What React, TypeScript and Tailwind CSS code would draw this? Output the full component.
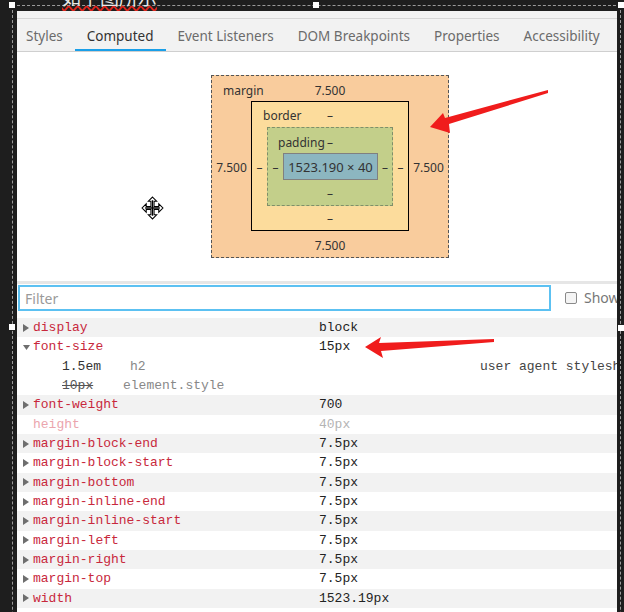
import React from "react";

type Row = { name: string; value: string; open?: boolean; dim?: boolean };

const rows: Row[] = [
  { name: "display", value: "block" },
  { name: "font-size", value: "15px", open: true },
  { name: "font-weight", value: "700" },
  { name: "height", value: "40px", dim: true },
  { name: "margin-block-end", value: "7.5px" },
  { name: "margin-block-start", value: "7.5px" },
  { name: "margin-bottom", value: "7.5px" },
  { name: "margin-inline-end", value: "7.5px" },
  { name: "margin-inline-start", value: "7.5px" },
  { name: "margin-left", value: "7.5px" },
  { name: "margin-right", value: "7.5px" },
  { name: "margin-top", value: "7.5px" },
  { name: "width", value: "1523.19px" },
];

const tabs = ["Styles", "Computed", "Event Listeners", "DOM Breakpoints", "Properties", "Accessibility"];

function Arrow({ open }: { open?: boolean }) {
  return (
    <svg width="7" height="8" viewBox="0 0 7 8" className="shrink-0">
      {open ? <polygon points="0,2 7,2 3.5,7" fill="#6e6e6e" /> : <polygon points="0,0 6,4 0,8" fill="#6e6e6e" />}
    </svg>
  );
}

function PropRow({ row, i }: { row: Row; i: number }) {
  const bg = i % 2 === 0 ? "bg-[#f2f2f2]" : "bg-white";
  return (
    <div className={bg}>
      <div className="flex h-[19.35px] items-center">
        <div className="flex w-[16px] shrink-0 justify-end pr-[3px]">{row.dim ? null : <Arrow open={row.open} />}</div>
        <span className={`w-[286px] shrink-0 ${row.dim ? "text-[#eba5ad]" : "text-[#c8283c]"}`}>{row.name}</span>
        <span className={row.dim ? "text-[#b4b4b4]" : "text-[#222]"}>{row.value}</span>
      </div>
      {row.open && (
        <>
          <div className="flex h-[19.35px] items-center whitespace-nowrap">
            <span className="w-[113px] shrink-0 pl-[45px] text-[#333]">1.5em</span>
            <span className="w-[350px] shrink-0 text-[#888]">h2</span>
            <span className="shrink-0 text-[#444]">user agent stylesheet</span>
          </div>
          <div className="flex h-[19.35px] items-center">
            <span className="w-[106px] shrink-0 pl-[45px] text-[#555] line-through">10px</span>
            <span className="text-[#888]">element.style</span>
          </div>
        </>
      )}
    </div>
  );
}

function BoxModel() {
  return (
    <div className="text-[12px] text-[#333] leading-none">
      <div className="grid grid-cols-[39px_auto_39px] grid-rows-[25px_auto_26px] border border-dashed border-[#555] bg-[#f9cc9d] w-[238px]">
        <div className="col-span-3 grid grid-cols-[1fr_auto_1fr] items-center pt-[4px]">
          <span className="pl-[11px]">margin</span>
          <span>7.500</span>
          <span />
        </div>
        <div className="flex items-center justify-center pt-[3px]">7.500</div>
        <div className="grid grid-cols-[15px_auto_15px] grid-rows-[25px_auto_24px] border border-black bg-[#fcdc9c]">
          <div className="col-span-3 grid grid-cols-[1fr_auto_1fr] items-center pt-[2px]">
            <span className="pl-[11px]">border</span>
            <span>–</span>
            <span />
          </div>
          <div className="flex items-center justify-center pt-[3px]">–</div>
          <div className="grid grid-cols-[15px_auto_14px] grid-rows-[25px_auto_25px] border border-dashed border-[#7f8f6a] bg-[#c3cf8a]">
            <div className="col-span-3 grid grid-cols-[1fr_auto_1fr] items-center pt-[4px]">
              <span className="pl-[10px]">padding</span>
              <span>–</span>
              <span />
            </div>
            <div className="flex items-center justify-center pt-[3px]">–</div>
            <div className="flex h-[27px] w-[95px] items-center justify-center border border-[#808080] bg-[#8cb6c0] pt-[2px] text-[13px]">
              1523.190 × 40
            </div>
            <div className="flex items-center justify-center pt-[3px]">–</div>
            <div className="col-span-3 flex items-center justify-center pt-[2px]">–</div>
          </div>
          <div className="flex items-center justify-center pt-[3px]">–</div>
          <div className="col-span-3 flex items-center justify-center pt-[2px]">–</div>
        </div>
        <div className="flex items-center justify-center pt-[3px]">7.500</div>
        <div className="col-span-3 flex items-center justify-center pt-[3px]">7.500</div>
      </div>
    </div>
  );
}

function MoveCursor() {
  return (
    <svg width="23" height="24" viewBox="0 0 22 23">
      <path
        d="M11 1 L15 5 L12.5 5 L12.5 10 L17 10 L17 7.5 L21 11.5 L17 15.5 L17 13 L12.5 13 L12.5 18 L15 18 L11 22 L7 18 L9.5 18 L9.5 13 L5 13 L5 15.5 L1 11.5 L5 7.5 L5 10 L9.5 10 L9.5 5 L7 5 Z"
        fill="white"
        stroke="black"
        strokeWidth="1"
      />
      <path d="M11 4 V19 M4 11.5 H18" stroke="black" strokeWidth="1.2" />
    </svg>
  );
}

export default function App() {
  return (
    <div className="relative h-[612px] w-[624px] overflow-hidden bg-[#1e1e1e] font-['Noto_Sans',sans-serif]">
      {/* selection frame */}
      <div className="absolute left-[12px] top-[5px] h-[700px] w-[609px] border border-dashed border-[#9a9a9a]" />
      <div className="absolute left-[9px] top-[2px] h-[6px] w-[6px] bg-white" />
      <div className="absolute left-[313px] top-[2px] h-[6px] w-[6px] bg-white" />
      <div className="absolute left-[618px] top-[2px] h-[6px] w-[6px] bg-white" />
      <div className="absolute left-[9px] top-[324px] h-[6px] w-[6px] bg-white" />
      <div className="absolute left-[618px] top-[325px] h-[6px] w-[6px] bg-white" />

      {/* clipped caption above */}
      <div className="relative h-[11px] overflow-hidden">
        <div className="ml-[62px] mt-[-13px] font-['Noto_Sans_CJK_SC',sans-serif] text-[19px] leading-[20px] text-[#e8e8e8] underline decoration-wavy decoration-[#e0241c] underline-offset-[0px]">
          如下图所示
        </div>
      </div>

      <div className="relative ml-[17px] h-[601px] w-[600px] overflow-hidden bg-white">
        <div className="h-[8px] border-b border-[#d6d6d6] bg-[#f2f2f2]" />
        <div className="flex h-[33px] border-b border-[#cfcfcf] bg-[#f2f2f2] text-[13.5px] text-[#6b6b6b]">
          {tabs.map((t) => (
            <div
              key={t}
              className={`flex items-center px-[12px] pt-[3px] first:pl-[9px] whitespace-nowrap ${
                t === "Computed" ? "border-b-[2px] border-[#1a9fe8] pt-[5px] text-[#333]" : ""
              }`}
            >
              {t}
            </div>
          ))}
        </div>

        <div className="flex h-[229px]">
          <div className="flex w-[194px] items-start justify-center pt-[144px] pl-[76px]">
            <MoveCursor />
          </div>
          <div className="pt-[23px]">
            <BoxModel />
          </div>
        </div>

        <div className="h-[3px] bg-[#e6e6e6]" />
        <div className="flex h-[34px] items-start pt-[1px]">
          <div className="ml-[1px] flex h-[26px] w-[533px] shrink-0 items-center border-[2px] border-[#5cc1f2] pl-[5px] text-[14px] text-[#9a9a9a]">
            Filter
          </div>
          <div className="ml-[14px] mt-[7px] h-[12px] w-[12px] shrink-0 rounded-[2px] border border-[#8a8a8a] bg-[#f4f4f4]" />
          <span className="ml-[7px] mt-[2px] text-[14px] text-[#777]">Show</span>
        </div>

        <div className="font-['Liberation_Mono',monospace] text-[13px]">
          {rows.map((r, i) => (
            <PropRow key={r.name} row={r} i={i} />
          ))}
        </div>
      </div>

      {/* annotation arrows */}
      <svg className="pointer-events-none absolute left-0 top-0" width="624" height="612">
        <polygon points="430,127 443,113 445,118 548,90 548,93 449,124 450,133" fill="#f01c1c" />
        <polygon points="365,347 381,337 379,343 494,339 494,342 381,351 383,358" fill="#f01c1c" />
      </svg>
    </div>
  );
}
